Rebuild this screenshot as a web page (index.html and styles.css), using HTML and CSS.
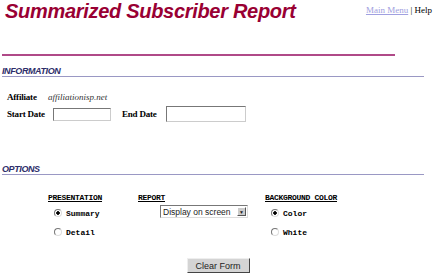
FILE: index.html
```html
<!DOCTYPE html>
<html lang="en">
<head>
    <meta charset="UTF-8">
    <title>Summarized Subscriber Report</title>
    <link rel="stylesheet" href="styles.css">
</head>
<body>
    <div class="header">
        <h1>Summarized Subscriber Report</h1>
        <div class="nav"><a href="#">Main Menu</a> | Help</div>
    </div>
    <hr class="title-rule">

    <div class="section">
        <h2>INFORMATION</h2>
        <div class="info">
            <div class="row">
                <span class="label aff-label">Affiliate</span>
                <span class="value">affiliationisp.net</span>
            </div>
            <div class="row">
                <span class="label start-label">Start Date</span>
                <input type="text" class="date start">
                <span class="label end-label">End Date</span>
                <input type="text" class="date end">
            </div>
        </div>
    </div>

    <div class="section options-section">
        <h2>OPTIONS</h2>
        <div class="options">
            <div class="col col-pres">
                <div class="col-head">PRESENTATION</div>
                <label class="radio"><input type="radio" name="pres" checked> Summary</label>
                <label class="radio"><input type="radio" name="pres"> Detail</label>
            </div>
            <div class="col col-report">
                <div class="col-head">REPORT</div>
                <div class="select">
                    <span>Display on screen</span>
                    <span class="arrow">&#9660;</span>
                </div>
            </div>
            <div class="col col-bg">
                <div class="col-head">BACKGROUND COLOR</div>
                <label class="radio"><input type="radio" name="bg" checked> Color</label>
                <label class="radio"><input type="radio" name="bg"> White</label>
            </div>
        </div>
    </div>

    <div class="actions">
        <button type="button" class="clear">Clear Form</button>
    </div>
</body>
</html>
```
FILE: styles.css
```css
body {
    margin: 0;
    background: #fff;
    font-family: "Liberation Serif", serif;
    color: #000;
    width: 435px;
    height: 279px;
    overflow: hidden;
}

.header {
    display: flex;
    justify-content: space-between;
    align-items: flex-start;
    padding: 0 3px 0 5px;
}

h1 {
    margin: 0;
    font-family: "Liberation Sans", sans-serif;
    font-style: italic;
    font-weight: bold;
    font-size: 20px;
    line-height: 22px;
    color: #990033;
    letter-spacing: -0.3px;
}

.nav {
    font-size: 9px;
    margin-top: 5px;
}

.nav a {
    color: #a0a0e0;
}

.title-rule {
    margin: 32px 0 0 2px;
    width: 393px;
    height: 2px;
    border: 0;
    background: #b04a88;
}

.section {
    margin-top: 10px;
}

h2 {
    margin: 0 11px 0 2px;
    font-family: "Liberation Sans", sans-serif;
    font-style: italic;
    font-weight: bold;
    font-size: 9px;
    line-height: 10px;
    color: #2e2e6a;
    letter-spacing: -0.4px;
    border-bottom: 1px solid #9a98c4;
}

.info {
    padding: 12px 0 0 7px;
}

.row {
    display: flex;
    align-items: center;
    font-size: 9px;
    height: 16px;
}

.row + .row {
    margin-top: 1px;
}

.label {
    font-weight: bold;
    letter-spacing: -0.2px;
}

.aff-label {
    width: 41px;
}

.value {
    font-style: italic;
    color: #333;
}

.start-label {
    width: 46px;
}

.end-label {
    width: 44px;
    margin-left: 11px;
}

.date {
    box-sizing: border-box;
    padding: 0;
    border: 1px solid #777;
    border-right-color: #ccc;
    border-bottom-color: #ccc;
    background: #fff;
    height: 13px;
}

.date.start {
    width: 58px;
}

.date.end {
    width: 80px;
    height: 16px;
}

.options-section {
    margin-top: 42px;
}

.options {
    display: flex;
    padding: 18px 0 0 48px;
    font-family: "Liberation Mono", monospace;
    font-weight: bold;
    font-size: 8px;
}

.col {
    display: flex;
    flex-direction: column;
}

.col-pres {
    width: 90px;
}

.col-report {
    width: 127px;
}

.col-head {
    text-decoration: underline;
    letter-spacing: -0.3px;
    height: 10px;
    line-height: 10px;
}

.radio {
    display: flex;
    align-items: center;
    gap: 4px;
    margin-left: 6px;
    height: 10px;
    margin-top: 9px;
}

.col-head + .radio {
    margin-top: 5px;
}

.radio input {
    appearance: none;
    margin: 0;
    width: 8px;
    height: 8px;
    border-radius: 50%;
    border: 1px solid;
    border-color: #777 #ddd #ddd #777;
    background: #fff;
    box-sizing: border-box;
}

.radio input:checked {
    background: radial-gradient(circle, #000 0 1.5px, #fff 2px);
}

.select {
    display: flex;
    align-items: center;
    justify-content: space-between;
    box-sizing: border-box;
    width: 88px;
    height: 13px;
    margin: 2px 0 0 22px;
    border: 1px solid #777;
    border-right-color: #ddd;
    border-bottom-color: #ddd;
    font-family: "Liberation Sans", sans-serif;
    font-weight: normal;
    font-size: 8.5px;
    padding-left: 2px;
    color: #222;
}

.arrow {
    width: 9px;
    height: 9px;
    margin-right: 1px;
    background: #ccc;
    border: 1px solid;
    border-color: #fff #555 #555 #fff;
    box-sizing: border-box;
    font-size: 5px;
    line-height: 8px;
    text-align: center;
}

.actions {
    display: flex;
    justify-content: center;
    padding: 21px 0 0 0;
}

.clear {
    margin-left: 1px;
    width: 63px;
    height: 15px;
    padding: 0;
    font-family: "Liberation Sans", sans-serif;
    font-size: 9px;
    color: #222;
    background: #d4d4d4;
    border: 1px solid;
    border-color: #eee #444 #444 #eee;
}
```
